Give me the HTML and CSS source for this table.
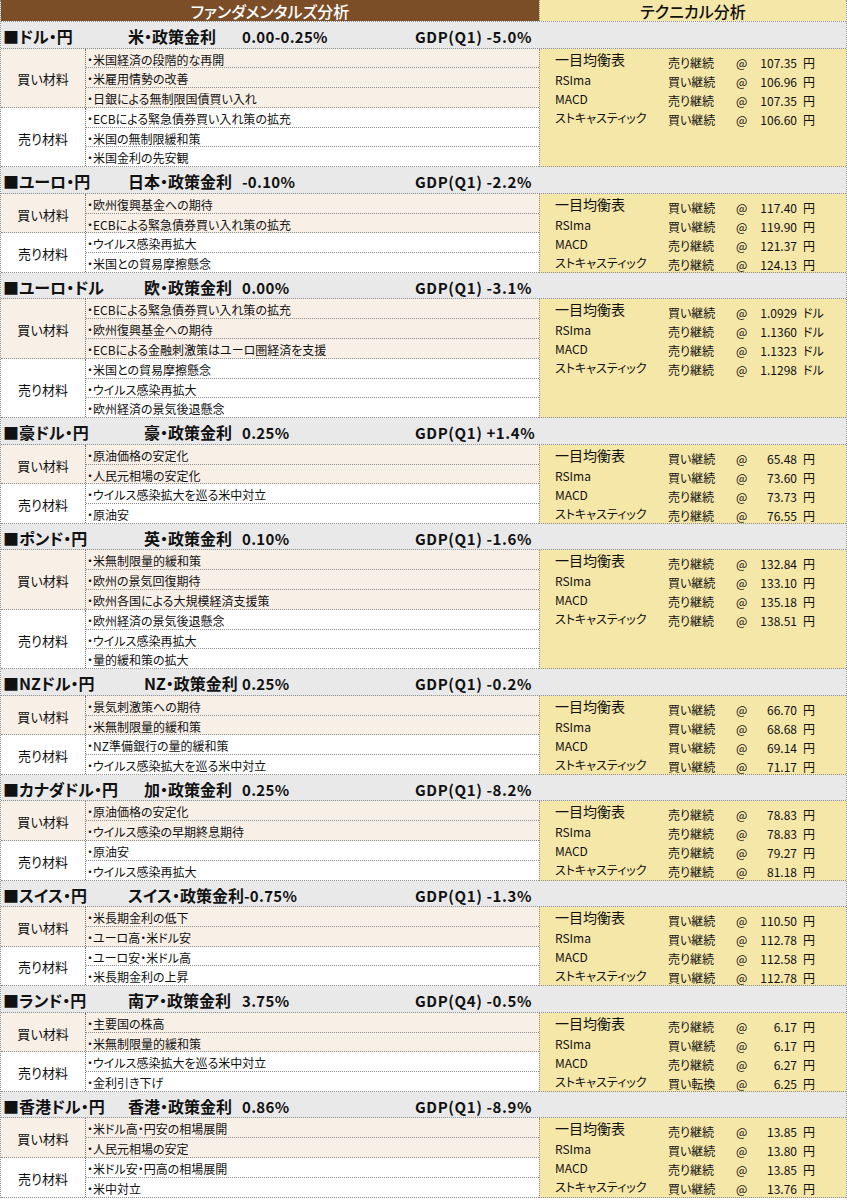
FILE: index.html
```html
<!DOCTYPE html>
<html lang="ja">
<head>
<meta charset="utf-8">
<title>ファンダメンタルズ分析 / テクニカル分析</title>
<link rel="stylesheet" href="styles.css">
</head>
<body>
<div class="sheet">
  <div class="title">
    <div class="title-fund">ファンダメンタルズ分析</div>
    <div class="title-tech">テクニカル分析</div>
  </div>

  <!-- 1 -->
  <section class="pair">
    <div class="pair-head">
      <span class="pair-name">■ドル・円</span>
      <span class="rate"><span class="rate-label">米・政策金利</span><span class="rate-val">0.00-0.25%</span></span>
      <span class="gdp">GDP(Q1) -5.0%</span>
    </div>
    <div class="pair-body">
      <div class="groups">
        <div class="group buy">
          <div class="side">買い材料</div>
          <ul class="items"><li>・米国経済の段階的な再開</li><li>・米雇用情勢の改善</li><li>・日銀による無制限国債買い入れ</li></ul>
        </div>
        <div class="group sell">
          <div class="side">売り材料</div>
          <ul class="items"><li>・ECBによる緊急債券買い入れ策の拡充</li><li>・米国の無制限緩和策</li><li>・米国金利の先安観</li></ul>
        </div>
      </div>
      <div class="tech">
        <div class="tline"><span class="tl tl-big">一目均衡表</span><span class="tv">売り継続</span><span class="tv">@</span><span class="tv num">107.35</span><span class="tv unit">円</span></div>
        <div class="tline"><span class="tl">RSIma</span><span class="tv">買い継続</span><span class="tv">@</span><span class="tv num">106.96</span><span class="tv unit">円</span></div>
        <div class="tline"><span class="tl">MACD</span><span class="tv">売り継続</span><span class="tv">@</span><span class="tv num">107.35</span><span class="tv unit">円</span></div>
        <div class="tline"><span class="tl">ストキャスティック</span><span class="tv">買い継続</span><span class="tv">@</span><span class="tv num">106.60</span><span class="tv unit">円</span></div>
      </div>
    </div>
  </section>

  <!-- 2 -->
  <section class="pair">
    <div class="pair-head">
      <span class="pair-name">■ユーロ・円</span>
      <span class="rate"><span class="rate-label">日本・政策金利</span><span class="rate-val">-0.10%</span></span>
      <span class="gdp">GDP(Q1) -2.2%</span>
    </div>
    <div class="pair-body">
      <div class="groups">
        <div class="group buy">
          <div class="side">買い材料</div>
          <ul class="items"><li>・欧州復興基金への期待</li><li>・ECBによる緊急債券買い入れ策の拡充</li></ul>
        </div>
        <div class="group sell">
          <div class="side">売り材料</div>
          <ul class="items"><li>・ウイルス感染再拡大</li><li>・米国との貿易摩擦懸念</li></ul>
        </div>
      </div>
      <div class="tech">
        <div class="tline"><span class="tl tl-big">一目均衡表</span><span class="tv">買い継続</span><span class="tv">@</span><span class="tv num">117.40</span><span class="tv unit">円</span></div>
        <div class="tline"><span class="tl">RSIma</span><span class="tv">買い継続</span><span class="tv">@</span><span class="tv num">119.90</span><span class="tv unit">円</span></div>
        <div class="tline"><span class="tl">MACD</span><span class="tv">売り継続</span><span class="tv">@</span><span class="tv num">121.37</span><span class="tv unit">円</span></div>
        <div class="tline"><span class="tl">ストキャスティック</span><span class="tv">売り継続</span><span class="tv">@</span><span class="tv num">124.13</span><span class="tv unit">円</span></div>
      </div>
    </div>
  </section>

  <!-- 3 -->
  <section class="pair">
    <div class="pair-head">
      <span class="pair-name">■ユーロ・ドル</span>
      <span class="rate"><span class="rate-label indent">欧・政策金利</span><span class="rate-val">0.00%</span></span>
      <span class="gdp">GDP(Q1) -3.1%</span>
    </div>
    <div class="pair-body">
      <div class="groups">
        <div class="group buy">
          <div class="side">買い材料</div>
          <ul class="items"><li>・ECBによる緊急債券買い入れ策の拡充</li><li>・欧州復興基金への期待</li><li>・ECBによる金融刺激策はユーロ圏経済を支援</li></ul>
        </div>
        <div class="group sell">
          <div class="side">売り材料</div>
          <ul class="items"><li>・米国との貿易摩擦懸念</li><li>・ウイルス感染再拡大</li><li>・欧州経済の景気後退懸念</li></ul>
        </div>
      </div>
      <div class="tech">
        <div class="tline"><span class="tl tl-big">一目均衡表</span><span class="tv">買い継続</span><span class="tv">@</span><span class="tv num">1.0929</span><span class="tv unit">ドル</span></div>
        <div class="tline"><span class="tl">RSIma</span><span class="tv">売り継続</span><span class="tv">@</span><span class="tv num">1.1360</span><span class="tv unit">ドル</span></div>
        <div class="tline"><span class="tl">MACD</span><span class="tv">売り継続</span><span class="tv">@</span><span class="tv num">1.1323</span><span class="tv unit">ドル</span></div>
        <div class="tline"><span class="tl">ストキャスティック</span><span class="tv">売り継続</span><span class="tv">@</span><span class="tv num">1.1298</span><span class="tv unit">ドル</span></div>
      </div>
    </div>
  </section>

  <!-- 4 -->
  <section class="pair">
    <div class="pair-head">
      <span class="pair-name">■豪ドル・円</span>
      <span class="rate"><span class="rate-label indent">豪・政策金利</span><span class="rate-val">0.25%</span></span>
      <span class="gdp">GDP(Q1) +1.4%</span>
    </div>
    <div class="pair-body">
      <div class="groups">
        <div class="group buy">
          <div class="side">買い材料</div>
          <ul class="items"><li>・原油価格の安定化</li><li>・人民元相場の安定化</li></ul>
        </div>
        <div class="group sell">
          <div class="side">売り材料</div>
          <ul class="items"><li>・ウイルス感染拡大を巡る米中対立</li><li>・原油安</li></ul>
        </div>
      </div>
      <div class="tech">
        <div class="tline"><span class="tl tl-big">一目均衡表</span><span class="tv">買い継続</span><span class="tv">@</span><span class="tv num">65.48</span><span class="tv unit">円</span></div>
        <div class="tline"><span class="tl">RSIma</span><span class="tv">買い継続</span><span class="tv">@</span><span class="tv num">73.60</span><span class="tv unit">円</span></div>
        <div class="tline"><span class="tl">MACD</span><span class="tv">売り継続</span><span class="tv">@</span><span class="tv num">73.73</span><span class="tv unit">円</span></div>
        <div class="tline"><span class="tl">ストキャスティック</span><span class="tv">売り継続</span><span class="tv">@</span><span class="tv num">76.55</span><span class="tv unit">円</span></div>
      </div>
    </div>
  </section>

  <!-- 5 -->
  <section class="pair">
    <div class="pair-head">
      <span class="pair-name">■ポンド・円</span>
      <span class="rate"><span class="rate-label indent">英・政策金利</span><span class="rate-val">0.10%</span></span>
      <span class="gdp">GDP(Q1) -1.6%</span>
    </div>
    <div class="pair-body">
      <div class="groups">
        <div class="group buy">
          <div class="side">買い材料</div>
          <ul class="items"><li>・米無制限量的緩和策</li><li>・欧州の景気回復期待</li><li>・欧州各国による大規模経済支援策</li></ul>
        </div>
        <div class="group sell">
          <div class="side">売り材料</div>
          <ul class="items"><li>・欧州経済の景気後退懸念</li><li>・ウイルス感染再拡大</li><li>・量的緩和策の拡大</li></ul>
        </div>
      </div>
      <div class="tech">
        <div class="tline"><span class="tl tl-big">一目均衡表</span><span class="tv">売り継続</span><span class="tv">@</span><span class="tv num">132.84</span><span class="tv unit">円</span></div>
        <div class="tline"><span class="tl">RSIma</span><span class="tv">買い継続</span><span class="tv">@</span><span class="tv num">133.10</span><span class="tv unit">円</span></div>
        <div class="tline"><span class="tl">MACD</span><span class="tv">売り継続</span><span class="tv">@</span><span class="tv num">135.18</span><span class="tv unit">円</span></div>
        <div class="tline"><span class="tl">ストキャスティック</span><span class="tv">売り継続</span><span class="tv">@</span><span class="tv num">138.51</span><span class="tv unit">円</span></div>
      </div>
    </div>
  </section>

  <!-- 6 -->
  <section class="pair">
    <div class="pair-head">
      <span class="pair-name">■NZドル・円</span>
      <span class="rate"><span class="rate-label indent">NZ・政策金利</span><span class="rate-val">0.25%</span></span>
      <span class="gdp">GDP(Q1) -0.2%</span>
    </div>
    <div class="pair-body">
      <div class="groups">
        <div class="group buy">
          <div class="side">買い材料</div>
          <ul class="items"><li>・景気刺激策への期待</li><li>・米無制限量的緩和策</li></ul>
        </div>
        <div class="group sell">
          <div class="side">売り材料</div>
          <ul class="items"><li>・NZ準備銀行の量的緩和策</li><li>・ウイルス感染拡大を巡る米中対立</li></ul>
        </div>
      </div>
      <div class="tech">
        <div class="tline"><span class="tl tl-big">一目均衡表</span><span class="tv">買い継続</span><span class="tv">@</span><span class="tv num">66.70</span><span class="tv unit">円</span></div>
        <div class="tline"><span class="tl">RSIma</span><span class="tv">買い継続</span><span class="tv">@</span><span class="tv num">68.68</span><span class="tv unit">円</span></div>
        <div class="tline"><span class="tl">MACD</span><span class="tv">買い継続</span><span class="tv">@</span><span class="tv num">69.14</span><span class="tv unit">円</span></div>
        <div class="tline"><span class="tl">ストキャスティック</span><span class="tv">買い継続</span><span class="tv">@</span><span class="tv num">71.17</span><span class="tv unit">円</span></div>
      </div>
    </div>
  </section>

  <!-- 7 -->
  <section class="pair">
    <div class="pair-head">
      <span class="pair-name">■カナダドル・円</span>
      <span class="rate"><span class="rate-label indent">加・政策金利</span><span class="rate-val">0.25%</span></span>
      <span class="gdp">GDP(Q1) -8.2%</span>
    </div>
    <div class="pair-body">
      <div class="groups">
        <div class="group buy">
          <div class="side">買い材料</div>
          <ul class="items"><li>・原油価格の安定化</li><li>・ウイルス感染の早期終息期待</li></ul>
        </div>
        <div class="group sell">
          <div class="side">売り材料</div>
          <ul class="items"><li>・原油安</li><li>・ウイルス感染再拡大</li></ul>
        </div>
      </div>
      <div class="tech">
        <div class="tline"><span class="tl tl-big">一目均衡表</span><span class="tv">売り継続</span><span class="tv">@</span><span class="tv num">78.83</span><span class="tv unit">円</span></div>
        <div class="tline"><span class="tl">RSIma</span><span class="tv">売り継続</span><span class="tv">@</span><span class="tv num">78.83</span><span class="tv unit">円</span></div>
        <div class="tline"><span class="tl">MACD</span><span class="tv">売り継続</span><span class="tv">@</span><span class="tv num">79.27</span><span class="tv unit">円</span></div>
        <div class="tline"><span class="tl">ストキャスティック</span><span class="tv">売り継続</span><span class="tv">@</span><span class="tv num">81.18</span><span class="tv unit">円</span></div>
      </div>
    </div>
  </section>

  <!-- 8 -->
  <section class="pair">
    <div class="pair-head">
      <span class="pair-name">■スイス・円</span>
      <span class="rate"><span class="rate-label">スイス・政策金利</span><span class="rate-val">-0.75%</span></span>
      <span class="gdp">GDP(Q1) -1.3%</span>
    </div>
    <div class="pair-body">
      <div class="groups">
        <div class="group buy">
          <div class="side">買い材料</div>
          <ul class="items"><li>・米長期金利の低下</li><li>・ユーロ高・米ドル安</li></ul>
        </div>
        <div class="group sell">
          <div class="side">売り材料</div>
          <ul class="items"><li>・ユーロ安・米ドル高</li><li>・米長期金利の上昇</li></ul>
        </div>
      </div>
      <div class="tech">
        <div class="tline"><span class="tl tl-big">一目均衡表</span><span class="tv">買い継続</span><span class="tv">@</span><span class="tv num">110.50</span><span class="tv unit">円</span></div>
        <div class="tline"><span class="tl">RSIma</span><span class="tv">買い継続</span><span class="tv">@</span><span class="tv num">112.78</span><span class="tv unit">円</span></div>
        <div class="tline"><span class="tl">MACD</span><span class="tv">売り継続</span><span class="tv">@</span><span class="tv num">112.58</span><span class="tv unit">円</span></div>
        <div class="tline"><span class="tl">ストキャスティック</span><span class="tv">買い継続</span><span class="tv">@</span><span class="tv num">112.78</span><span class="tv unit">円</span></div>
      </div>
    </div>
  </section>

  <!-- 9 -->
  <section class="pair">
    <div class="pair-head">
      <span class="pair-name">■ランド・円</span>
      <span class="rate"><span class="rate-label">南ア・政策金利</span><span class="rate-val">3.75%</span></span>
      <span class="gdp">GDP(Q4) -0.5%</span>
    </div>
    <div class="pair-body">
      <div class="groups">
        <div class="group buy">
          <div class="side">買い材料</div>
          <ul class="items"><li>・主要国の株高</li><li>・米無制限量的緩和策</li></ul>
        </div>
        <div class="group sell">
          <div class="side">売り材料</div>
          <ul class="items"><li>・ウイルス感染拡大を巡る米中対立</li><li>・金利引き下げ</li></ul>
        </div>
      </div>
      <div class="tech">
        <div class="tline"><span class="tl tl-big">一目均衡表</span><span class="tv">売り継続</span><span class="tv">@</span><span class="tv num">6.17</span><span class="tv unit">円</span></div>
        <div class="tline"><span class="tl">RSIma</span><span class="tv">買い継続</span><span class="tv">@</span><span class="tv num">6.17</span><span class="tv unit">円</span></div>
        <div class="tline"><span class="tl">MACD</span><span class="tv">売り継続</span><span class="tv">@</span><span class="tv num">6.27</span><span class="tv unit">円</span></div>
        <div class="tline"><span class="tl">ストキャスティック</span><span class="tv">買い転換</span><span class="tv">@</span><span class="tv num">6.25</span><span class="tv unit">円</span></div>
      </div>
    </div>
  </section>

  <!-- 10 -->
  <section class="pair">
    <div class="pair-head">
      <span class="pair-name">■香港ドル・円</span>
      <span class="rate"><span class="rate-label">香港・政策金利</span><span class="rate-val">0.86%</span></span>
      <span class="gdp">GDP(Q1) -8.9%</span>
    </div>
    <div class="pair-body">
      <div class="groups">
        <div class="group buy">
          <div class="side">買い材料</div>
          <ul class="items"><li>・米ドル高・円安の相場展開</li><li>・人民元相場の安定</li></ul>
        </div>
        <div class="group sell">
          <div class="side">売り材料</div>
          <ul class="items"><li>・米ドル安・円高の相場展開</li><li>・米中対立</li></ul>
        </div>
      </div>
      <div class="tech">
        <div class="tline"><span class="tl tl-big">一目均衡表</span><span class="tv">売り継続</span><span class="tv">@</span><span class="tv num">13.85</span><span class="tv unit">円</span></div>
        <div class="tline"><span class="tl">RSIma</span><span class="tv">買い継続</span><span class="tv">@</span><span class="tv num">13.80</span><span class="tv unit">円</span></div>
        <div class="tline"><span class="tl">MACD</span><span class="tv">売り継続</span><span class="tv">@</span><span class="tv num">13.85</span><span class="tv unit">円</span></div>
        <div class="tline"><span class="tl">ストキャスティック</span><span class="tv">買い継続</span><span class="tv">@</span><span class="tv num">13.76</span><span class="tv unit">円</span></div>
      </div>
    </div>
  </section>
</div>
</body>
</html>
```

FILE: styles.css
```css
* {
  box-sizing: border-box;
  margin: 0;
  padding: 0;
}

body {
  margin: 0;
  background: #ffffff;
  color: #111111;
  font-family: "Noto Sans CJK JP", "Noto Sans", sans-serif;
  font-feature-settings: "palt";
}

.sheet {
  width: 847px;
  border-left: 1px dotted #8c8c8c;
  border-right: 1px dotted #8c8c8c;
}

/* ---------- title bar ---------- */
.title {
  display: flex;
  height: 22px;
  border-bottom: 1px dotted #8c8c8c;
}

.title-fund {
  width: 538px;
  background: #7b4e27;
  color: #ffffff;
  font-size: 16px;
  font-weight: 500;
  line-height: 18px;
  padding-top: 2px;
  text-align: center;
}

.title-tech {
  flex: 1;
  background: #f5e7a8;
  border-left: 1px dotted #8c8c8c;
  color: #111111;
  font-size: 16px;
  font-weight: 500;
  line-height: 18px;
  padding-top: 2px;
  text-align: center;
}

/* ---------- pair header ---------- */
.pair-head {
  display: flex;
  align-items: baseline;
  height: 26.5px;
  padding-top: 4px;
  background: #e9e9e9;
  border-bottom: 1px dotted #8c8c8c;
  font-weight: 700;
  line-height: 20px;
  white-space: nowrap;
  overflow: hidden;
}

.pair-name {
  width: 127px;
  padding-left: 2px;
  font-size: 16px;
}

.rate {
  display: flex;
  align-items: baseline;
  width: 287px;
}

.rate-label {
  min-width: 114px;
  font-size: 16px;
}

.rate-label.indent {
  padding-left: 16px;
}

.rate-val {
  font-size: 15px;
  letter-spacing: 0.3px;
}

.gdp {
  font-size: 15px;
  letter-spacing: 0.6px;
}

/* ---------- pair body ---------- */
.pair-body {
  display: flex;
}

.groups {
  width: 538px;
}

.group {
  display: flex;
  border-bottom: 1px dotted #8c8c8c;
}

.group.buy {
  background: #f8efe7;
}

.group.sell {
  background: #ffffff;
}

.side {
  width: 85px;
  flex: none;
  display: flex;
  align-items: center;
  justify-content: center;
  border-right: 1px dotted #6f6f6f;
  font-size: 13px;
  padding-top: 2px;
}

.items {
  flex: 1;
  list-style: none;
}

.items li {
  height: 19.8px;
  padding: 2px 0 0 1px;
  border-bottom: 1px dotted #8c8c8c;
  font-size: 12px;
  line-height: 17px;
  white-space: nowrap;
  overflow: hidden;
}

.items li:last-child {
  height: 18.8px;
  border-bottom: none;
}

/* ---------- technical box ---------- */
.tech {
  width: 307px;
  flex: none;
  padding-top: 2px;
  background: #f5e7a8;
  border-left: 1px dotted #8c8c8c;
  border-bottom: 1px dotted #8c8c8c;
}

.tline {
  display: grid;
  grid-template-columns: 113px 68px 21px 40px auto;
  height: 19px;
  padding-left: 15px;
  font-size: 12px;
  white-space: nowrap;
}

.tl {
  align-self: end;
  line-height: 19px;
}

.tl-big {
  align-self: start;
  font-size: 14px;
  line-height: 16px;
}

.tv {
  align-self: end;
  line-height: 14px;
}

.num {
  text-align: right;
}

.unit {
  padding-left: 6px;
}
```
